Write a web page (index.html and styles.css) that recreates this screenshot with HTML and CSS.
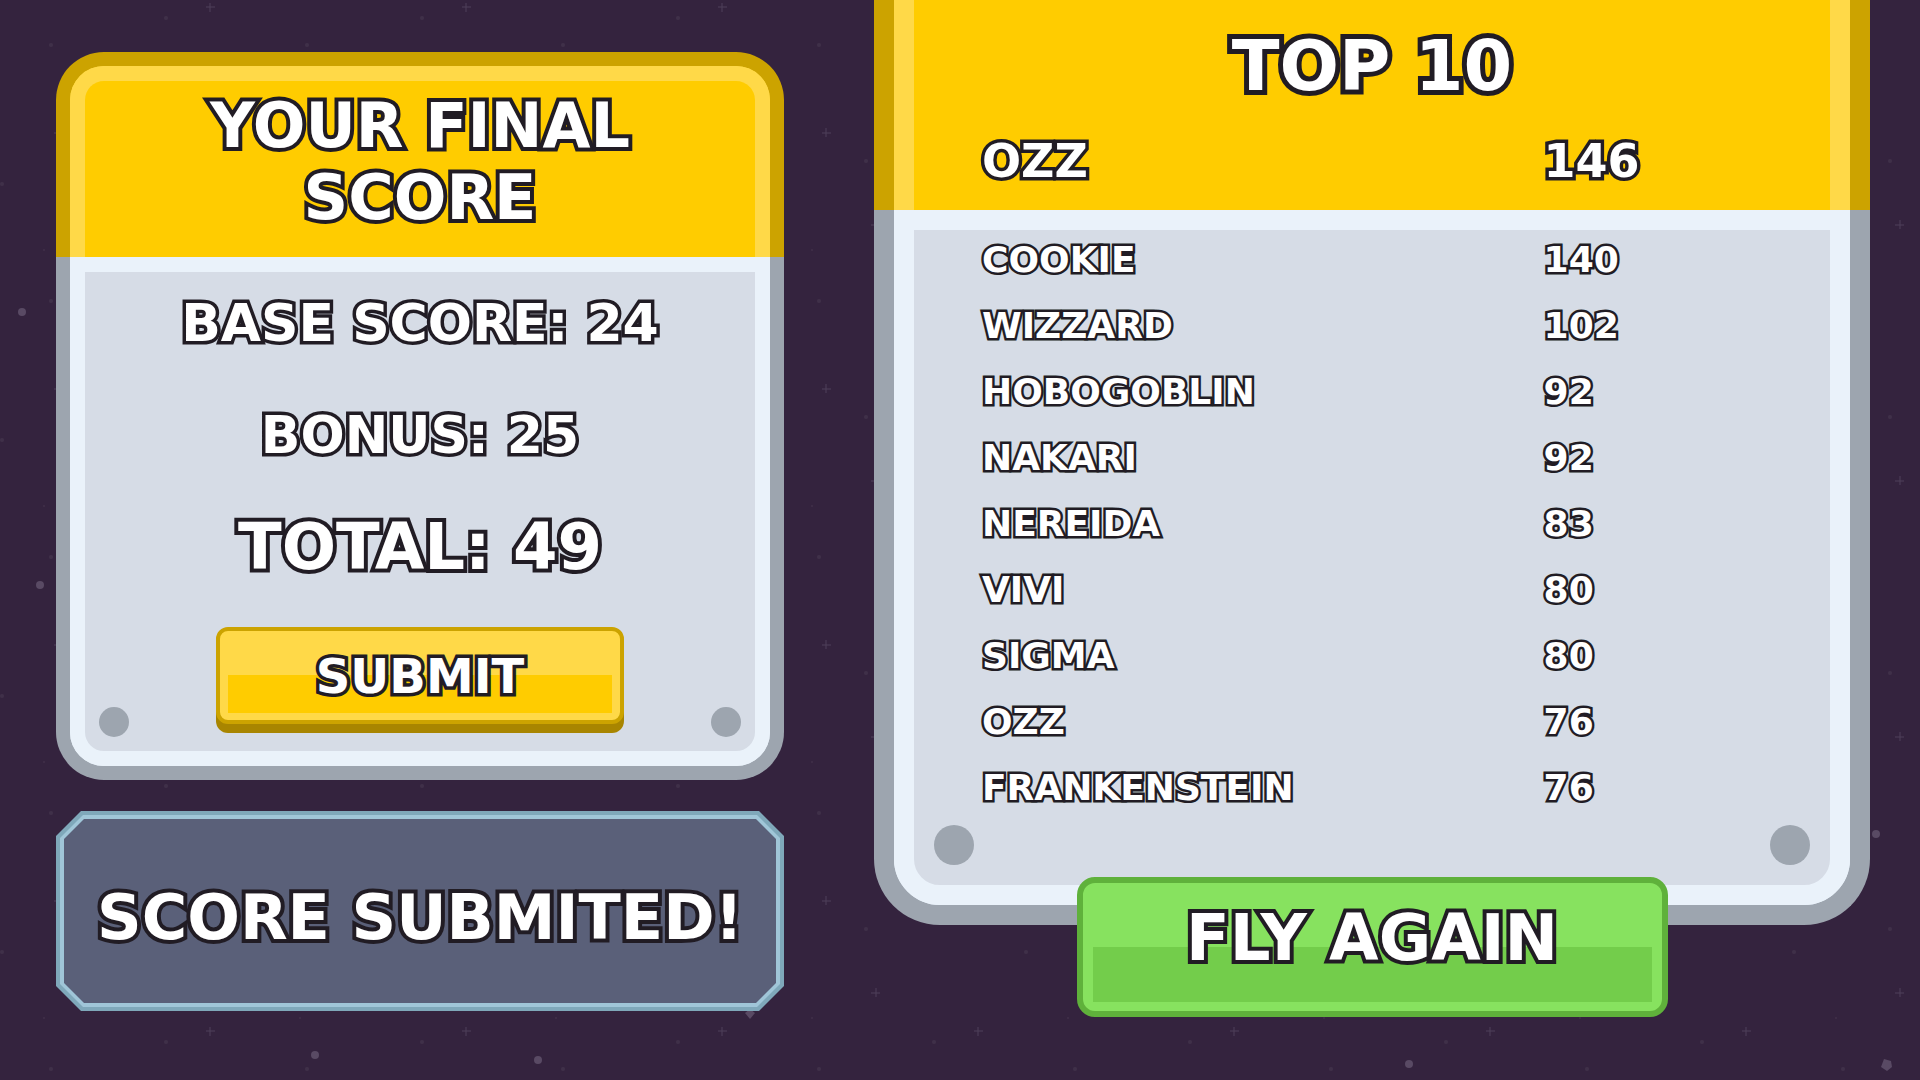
FILE: index.html
```html
<!DOCTYPE html>
<html lang="en">
  <head>
    <meta charset="UTF-8" />
    <meta name="viewport" content="width=device-width, initial-scale=1.0" />
    <title>Game Over</title>
    <link rel="stylesheet" href="styles.css">
  </head>
  <body>
    <svg class="stars" aria-hidden="true">
      <defs>
        <pattern id="stars" width="256" height="256" patternUnits="userSpaceOnUse">
          <g stroke="#4d3f59" stroke-width="1">
            <path d="M54 133h9M58 128v9M206 7h9M210 3v9M103 225h9M108 220v9" />
          </g>
          <g fill="#3f3049">
            <circle cx="98" cy="161" r="2" />
            <circle cx="51" cy="45" r="2" />
            <circle cx="166" cy="18" r="2" />
            <circle cx="44" cy="250" r="1" />
            <circle cx="2" cy="184" r="2" />
          </g>
        </pattern>
      </defs>
      <rect width="100%" height="100%" fill="url(#stars)" />
      <g fill="#594a64">
        <circle cx="22" cy="312" r="4" />
        <circle cx="40" cy="585" r="4" />
        <circle cx="315" cy="1055" r="4" />
        <circle cx="538" cy="1060" r="4" />
        <circle cx="1409" cy="1064" r="4" />
        <circle cx="1876" cy="834" r="4" />
        <path d="M1884 1059l7 2 1 6-5 4-6-4z" />
        <path d="M750 1009l5 4-5 6-5-6z" />
      </g>
    </svg>

    <main class="container">
      <div class="column">
        <section class="panel">
          <div class="panel-header">
            <div class="panel-header-inner">
              <h1>YOUR FINAL SCORE</h1>
            </div>
          </div>
          <div class="panel-body">
            <form class="panel-body-inner score-form" id="scoreForm">
              <p class="score">BASE SCORE: 24</p>
              <p class="score">BONUS: 25</p>
              <p class="score total">TOTAL: 49</p>
              <button type="submit" class="btn btn-submit">SUBMIT</button>
            </form>
          </div>
        </section>

        <div class="notice" role="status">
          <div class="notice-edge">
            <p>SCORE SUBMITED!</p>
          </div>
        </div>
      </div>

      <div class="column column-board">
        <section class="panel panel-board">
          <div class="panel-header">
            <div class="panel-header-inner">
              <h2>TOP 10</h2>
              <table class="board board-first">
                <tr><td>OZZ</td><td>146</td></tr>
              </table>
            </div>
          </div>
          <div class="panel-body">
            <div class="panel-body-inner">
              <table class="board">
                <tr><td>COOKIE</td><td>140</td></tr>
                <tr><td>WIZZARD</td><td>102</td></tr>
                <tr><td>HOBOGOBLIN</td><td>92</td></tr>
                <tr><td>NAKARI</td><td>92</td></tr>
                <tr><td>NEREIDA</td><td>83</td></tr>
                <tr><td>VIVI</td><td>80</td></tr>
                <tr><td>SIGMA</td><td>80</td></tr>
                <tr><td>OZZ</td><td>76</td></tr>
                <tr><td>FRANKENSTEIN</td><td>76</td></tr>
              </table>
            </div>
          </div>
        </section>
        <button type="button" class="btn btn-again">FLY AGAIN</button>
      </div>
    </main>
  </body>
</html>
```
FILE: styles.css
```css
* {
  box-sizing: border-box;
}

body {
  margin: 0;
  min-height: 100vh;
  background-color: #34233e;
  font-family: "DejaVu Sans", sans-serif;
  font-weight: bold;
  color: #fff;
  -webkit-text-stroke: 8px #211c24;
  paint-order: stroke fill;
  stroke-linejoin: round;
}

h1,
h2,
p {
  margin: 0;
  font-weight: bold;
}

.stars {
  position: fixed;
  top: 0;
  left: 0;
  width: 100%;
  height: 100%;
  z-index: -1;
}

.container {
  display: grid;
  grid-template-columns: 728fr 996fr;
  align-items: start;
  gap: 90px;
  padding: 0 50px 0 56px;
}

.column {
  display: flex;
  flex-direction: column;
  gap: 31px;
  padding-top: 52px;
}

.column-board {
  align-items: center;
  gap: 0;
  padding-top: 0;
}

/* Panels */
.panel {
  --edge: 14px;
  --rim: 15px;
  --radius: 48px;
  --screw: 30px;
  --screw-gap: 14px;
  width: 100%;
  text-align: center;
}

.panel-board {
  --edge: 20px;
  --rim: 20px;
  --radius: 66px;
  --screw: 40px;
  --screw-gap: 20px;
}

.panel-header {
  border: var(--edge) solid #cca300;
  border-bottom: none;
  border-radius: var(--radius) var(--radius) 0 0;
  background-color: #ffd948;
}

.panel-header-inner {
  border: var(--rim) solid #ffd948;
  border-bottom: none;
  border-radius: calc(var(--radius) - var(--edge)) calc(var(--radius) - var(--edge)) 0 0;
  background-color: #ffcc00;
  padding: 9px 40px 23px;
}

/* the board hangs from the top of the screen */
.panel-board .panel-header,
.panel-board .panel-header-inner {
  border-top: none;
  border-radius: 0;
}

.panel-board .panel-header-inner {
  padding: 20px 68px 0;
}

.panel-body {
  border: var(--edge) solid #9da5af;
  border-top: none;
  border-radius: 0 0 var(--radius) var(--radius);
  background-color: #eaf2fa;
}

.panel-body-inner {
  position: relative;
  border: var(--rim) solid #eaf2fa;
  border-radius: 0 0 calc(var(--radius) - var(--edge)) calc(var(--radius) - var(--edge));
  background-color: #d6dce6;
}

.panel-board .panel-body-inner {
  padding: 0 68px 61px;
}

.panel-body-inner::before,
.panel-body-inner::after {
  content: "";
  position: absolute;
  bottom: var(--screw-gap);
  width: var(--screw);
  height: var(--screw);
  border-radius: 50%;
  background-color: #9da5af;
}

.panel-body-inner::before {
  left: var(--screw-gap);
}

.panel-body-inner::after {
  right: var(--screw-gap);
}

h1 {
  font-size: 62px;
  line-height: 72px;
}

h2 {
  font-size: 70px;
  line-height: 92px;
  -webkit-text-stroke-width: 10px;
}

/* Final score */
.score-form {
  display: flex;
  flex-direction: column;
  align-items: center;
  gap: 48px;
  padding: 19px 0 27px;
}

.score {
  font-size: 52px;
  line-height: 64px;
  -webkit-text-stroke-width: 7px;
}

.total {
  font-size: 64px;
  -webkit-text-stroke-width: 8px;
}

/* Buttons */
.btn {
  font-family: inherit;
  font-weight: bold;
  color: #fff;
  paint-order: stroke fill;
  cursor: pointer;
}

.btn-submit {
  width: 61%;
  height: 97px;
  padding: 0;
  border: 4px solid #cca300;
  border-radius: 12px;
  background: linear-gradient(#ffcc00, #ffcc00) 50% calc(100% - 7px) / calc(100% - 16px) 38px no-repeat #ffd948;
  box-shadow: 0 9px 0 #a88500;
  font-size: 48px;
  -webkit-text-stroke: 7px #211c24;
}

.btn-again {
  position: relative;
  width: 591px;
  max-width: 100%;
  height: 140px;
  margin-top: -48px;
  padding: 0 0 18px;
  border: 6px solid #5fb13b;
  border-radius: 18px;
  background: linear-gradient(#73cd4b, #73cd4b) 50% calc(100% - 9px) / calc(100% - 20px) 55px no-repeat #87e25f;
  font-size: 64px;
  -webkit-text-stroke: 8px #211c24;
}

/* Message box */
.notice,
.notice-edge,
.notice p {
  --cut: 25px;
  clip-path: polygon(var(--cut) 0, calc(100% - var(--cut)) 0, 100% var(--cut), 100% calc(100% - var(--cut)), calc(100% - var(--cut)) 100%, var(--cut) 100%, 0 calc(100% - var(--cut)), 0 var(--cut));
}

.notice {
  padding: 4px;
  background-color: #7fa8ba;
}

.notice-edge {
  --cut: 23px;
  padding: 4px;
  background-color: #a0c6d8;
}

.notice p {
  --cut: 20px;
  padding: 63px 0 49px;
  background-color: #5a6079;
  font-size: 62px;
  line-height: 72px;
  text-align: center;
  white-space: nowrap;
}

/* Leaderboard */
.board {
  width: 100%;
  border-collapse: collapse;
  table-layout: fixed;
  text-align: left;
  font-size: 36px;
  line-height: 60px;
  -webkit-text-stroke-width: 5px;
}

.board td {
  padding: 0 0 6px;
}

.board td:first-child {
  width: 72%;
}

.board-first {
  font-size: 46px;
  line-height: 98px;
  -webkit-text-stroke-width: 7px;
}

.board-first td {
  padding: 0;
}
```
